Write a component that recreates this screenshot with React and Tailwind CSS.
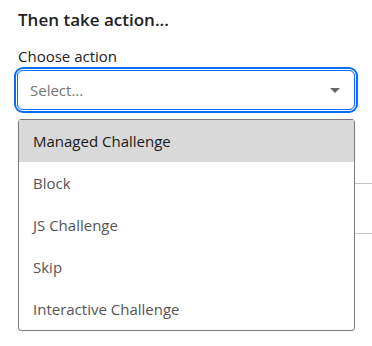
import React from "react";

const items = ["Managed Challenge", "Block", "JS Challenge", "Skip", "Interactive Challenge"];

export default function App() {
  return (
    <div
      className="relative w-[372px] h-[346px] bg-white overflow-hidden"
      style={{ fontFamily: '"Open Sans", "Noto Sans", sans-serif' }}
    >
      <div className="pl-[17px] pr-[17px] pt-[8px]">
        <h3 className="text-[17px] leading-[24px] font-semibold text-[#222] pl-[1px]">Then take action...</h3>
        <div className="mt-[14px] text-[15px] leading-[20px] text-[#222] pl-[1px]">Choose action</div>
        <div className="mt-[4px] h-[40px] border border-[#0b6bfb] rounded-[6px] shadow-[0_0_0_1px_#fff,0_0_0_3px_#0b6bfb] flex items-center justify-between pl-[12px] pr-[14px]">
          <span className="text-[15px] text-[#767676]">Select...</span>
          <svg width="10" height="5" viewBox="0 0 10 5" className="mt-[1px]">
            <path d="M0 0 H10 L5 5 Z" fill="#666" />
          </svg>
        </div>
      </div>
      <div className="pl-[40px] mt-[73px]">
        <div className="border-t border-[#c4c4c4] h-[50px]" />
        <div className="border-t border-[#c4c4c4] h-[50px]" />
      </div>
      <div className="absolute left-[18px] top-[119px] w-[337px] bg-white border border-[#7a7a7a] rounded-[3px]">
        {items.map((t, i) => (
          <div
            key={t}
            className={
              "h-[42px] flex items-center pl-[14px] text-[15px] " +
              (i === 0 ? "bg-[#d9d9d9] text-[#1a1a1a]" : "text-[#555]")
            }
          >
            {t}
          </div>
        ))}
      </div>
    </div>
  );
}
